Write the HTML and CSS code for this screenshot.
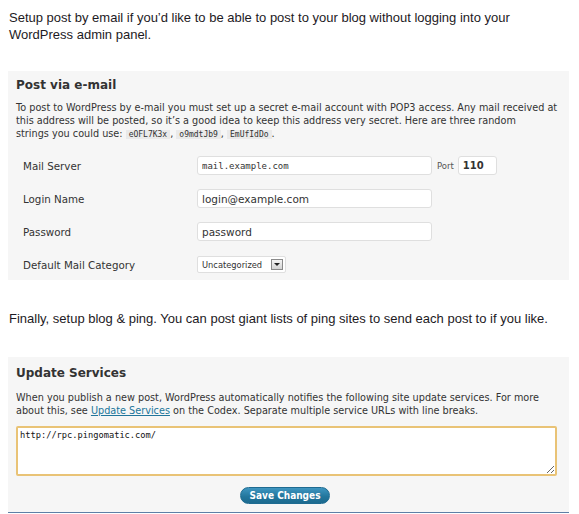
FILE: index.html
```html
<!DOCTYPE html>
<html lang="en">
<head>
    <meta charset="UTF-8">
    <title>Email and Update Services</title>
    <link rel="stylesheet" href="styles.css">
</head>
<body>

<p class="intro intro-first">Setup post by email if you’d like to be able to post to your blog without logging into your WordPress admin panel.</p>

<div class="panel panel-mail">
    <h3>Post via e-mail</h3>
    <p class="desc">To post to WordPress by e-mail you must set up a secret e-mail account with POP3 access. Any mail received at this address will be posted, so it’s a good idea to keep this address very secret. Here are three random<br>strings you could use: <code>eOFL7K3x</code>, <code>o9mdtJb9</code>, <code>EmUfIdDo</code>.</p>

    <div class="form-table">
        <div class="row">
            <label for="server">Mail Server</label>
            <div class="field">
                <input type="text" id="server" class="text mono" value="mail.example.com">
                <span class="port-label">Port</span>
                <input type="text" class="text port" value="110">
            </div>
        </div>
        <div class="row">
            <label for="login">Login Name</label>
            <div class="field"><input type="text" id="login" class="text" value="login@example.com"></div>
        </div>
        <div class="row">
            <label for="pass">Password</label>
            <div class="field"><input type="text" id="pass" class="text" value="password"></div>
        </div>
        <div class="row">
            <label>Default Mail Category</label>
            <div class="field">
                <div class="select">Uncategorized <span class="arrow"></span></div>
            </div>
        </div>
    </div>
</div>

<p class="intro intro-second">Finally, setup blog &amp; ping. You can post giant lists of ping sites to send each post to if you like.</p>

<div class="panel panel-ping">
    <h3>Update Services</h3>
    <p class="desc">When you publish a new post, WordPress automatically notifies the following site update services. For more about this, see <a href="#">Update Services</a> on the Codex. Separate multiple service URLs with line breaks.</p>
    <textarea class="services">http://rpc.pingomatic.com/</textarea>
    <div class="submit"><button type="button">Save Changes</button></div>
</div>

</body>
</html>
```

FILE: styles.css
```css
body {
    margin: 0;
    background-color: #fff;
    font-family: "DejaVu Sans", Verdana, sans-serif;
    color: #333;
}
.intro {
    font-family: "Liberation Sans", Arial, sans-serif;
    font-size: 13px;
    line-height: 17px;
    color: #1d1a24;
    margin: 0;
    padding-left: 9px;
    max-width: 530px;
}
.intro-first {
    padding-top: 9px;
}
.intro-second {
    margin-top: 30px;
    max-width: 565px;
    white-space: nowrap;
}
.panel {
    margin: 0 10px 0 8px;
    background-color: #f6f6f6;
    padding: 6px 8px 0 8px;
}
.panel-mail {
    margin-top: 28px;
    height: 203px;
}
.panel-ping {
    margin-top: 30px;
    padding-top: 8px;
    height: 147px;
    border-bottom: 1px solid #5e7fa6;
}
.panel h3 {
    margin: 0;
    font-size: 12px;
    line-height: 16px;
    font-weight: bold;
    color: #333;
}
.desc {
    margin: 8px 0 0 0;
    font-size: 9.7px;
    line-height: 13px;
    color: #333;
}
.panel-ping .desc {
    margin-top: 10px;
}
.desc code {
    font-family: "DejaVu Sans Mono", monospace;
    font-size: 8px;
    line-height: 11px;
    background-color: #eaeaea;
    padding: 0 3px;
}
.desc a {
    color: #21759b;
}
.form-table {
    margin-top: 9px;
    padding-left: 7px;
}
.row {
    display: flex;
    align-items: center;
    height: 33px;
}
.row label {
    width: 174px;
    font-size: 10.3px;
    color: #333;
}
.field {
    display: flex;
    align-items: center;
}
.text {
    box-sizing: border-box;
    width: 235px;
    height: 19px;
    border: 1px solid #dfdfdf;
    border-radius: 3px;
    background-color: #fff;
    padding: 0 4px;
    font-family: "DejaVu Sans", sans-serif;
    font-size: 10.5px;
    color: #333;
}
.text.mono {
    font-family: "DejaVu Sans Mono", monospace;
    font-size: 9px;
}
.port-label {
    font-size: 8.5px;
    color: #555;
    margin: 0 4px 0 5px;
}
.text.port {
    width: 39px;
    font-weight: bold;
    font-size: 10px;
}
.select {
    box-sizing: border-box;
    display: flex;
    align-items: center;
    width: 89px;
    height: 17px;
    border: 1px solid #dfdfdf;
    border-radius: 2px;
    background-color: #fff;
    padding: 0 2px 0 4px;
    font-size: 8.3px;
    color: #333;
}
.arrow {
    box-sizing: border-box;
    margin-left: auto;
    width: 12px;
    height: 11px;
    border: 1px solid #8a8a8a;
    background: linear-gradient(#f4f4f4, #d4d4d4);
    position: relative;
}
.arrow::after {
    content: "";
    position: absolute;
    left: 2px;
    top: 3px;
    border-left: 3px solid transparent;
    border-right: 3px solid transparent;
    border-top: 3px solid #222;
}
.services {
    display: block;
    box-sizing: border-box;
    margin-top: 9px;
    width: 541px;
    height: 50px;
    border: 2px solid #e9c376;
    border-radius: 2px;
    background-color: #fff;
    padding: 2px 2px;
    font-family: "DejaVu Sans Mono", monospace;
    font-size: 8.7px;
    color: #111;
    resize: vertical;
}
.submit {
    text-align: center;
    margin-top: 8px;
    padding-right: 7px;
}
.submit button {
    height: 17px;
    padding: 0 8px;
    border: 1px solid #1e6b91;
    border-radius: 9px;
    background: linear-gradient(#3e95c0, #21759b 60%, #1d6a8f);
    color: #fff;
    font-family: "DejaVu Sans Condensed", "DejaVu Sans", sans-serif;
    font-weight: bold;
    font-size: 10px;
    line-height: 15px;
    cursor: pointer;
}
```
